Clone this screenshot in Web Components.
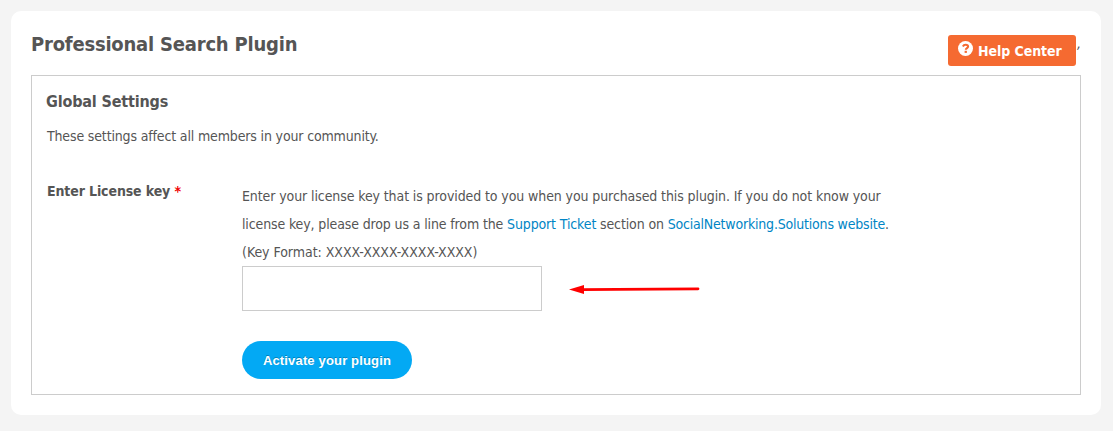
<!DOCTYPE html>
<html lang="en"><head><meta charset="utf-8"><title>Professional Search Plugin</title>
<style>
html,body{height:100%}
body{margin:0;background:#f4f4f4;color:#555;font:14px/28px "DejaVu Sans Condensed","DejaVu Sans",sans-serif;font-stretch:condensed}
</style></head><body>
<plugin-page>
  <span slot="title">Professional Search Plugin</span>
  <help-button slot="action">Help Center</help-button>
  <settings-form></settings-form>
</plugin-page>
<script>
const define = (name, html) => customElements.define(name, class extends HTMLElement {
  constructor() {
    super();
    this.attachShadow({ mode: 'open' }).innerHTML = html;
  }
});

define('help-button', `
<style>
:host{display:flex;box-sizing:border-box;width:128px;height:31px;padding:0 0 0 10px;align-items:center;background:#f56a31;border-radius:3px;color:#fff;font-weight:bold;letter-spacing:-.06px}
svg{width:15px;height:15px;margin:-4px 5px 0 0;flex:none}
</style>
<svg viewBox="0 0 15 15"><circle cx="7.5" cy="7.500" r="7.500" fill="#fff"/><path d="M4.900 5.500C5.500 4.200 6.400 3.700 7.600 3.700c1.500 0 2.500.8 2.500 1.900 0 1.500-2.300 1.500-2.300 3.200" fill="none" stroke="#f56a31" stroke-width="2.100"/><rect x="6.600" y="9.800" width="2.300" height="2.100" fill="#f56a31"/></svg><slot></slot>`);

define('red-arrow', `
<style>:host{display:block;width:131px;height:11px}svg{display:block}</style>
<svg width="131" height="11" viewBox="0 0 131 11"><path d="M13 5.700 48 5.300 129 4.800" fill="none" stroke="#f00" stroke-width="2.800" stroke-linecap="round"/><path d="M0 5.600 15 1.100v9z" fill="#f00"/></svg>`);

define('license-field', `
<style>
:host{display:grid;grid-template-columns:195px 1fr;letter-spacing:-.1px}
.label{font-weight:bold;letter-spacing:-.12px;margin-top:-5px}
.label b{color:#f00000}
.help{width:670px;white-space:nowrap}
.help span{letter-spacing:-.04px}
a{color:#0085c5;text-decoration:none}
a + a{letter-spacing:-.2px}
.row{display:flex;gap:27px}
input{box-sizing:border-box;width:300px;height:45px;margin:0;border:1px solid #ccc;background:#fff;padding:0 10px;outline:0}
red-arrow{margin-top:18px}
button{display:block;width:170px;height:38px;margin:30px 0 0;padding:1px 0 0;border:0;border-radius:19px;background:#03a9f4;color:#fff;font:bold 13px/37px "Liberation Sans",sans-serif;letter-spacing:.16px;text-shadow:0 -1px 0 rgba(0,0,0,.25)}
</style>
<div class="label">Enter License key <b>*</b></div>
<div>
  <div class="help">Enter your license key that is provided to you when you purchased this plugin. If you do not know your<br><span style="letter-spacing:-.13px">license key, please drop us a line from the <a href="#">Support Ticket</a> section on <a href="#">SocialNetworking.Solutions website</a>.</span><br><span>(Key Format: XXXX-XXXX-XXXX-XXXX)</span></div>
  <div class="row"><input type="text" aria-label="License key"><red-arrow></red-arrow></div>
  <button>Activate your plugin</button>
</div>`);

define('settings-form', `
<style>
:host{display:block;box-sizing:border-box;height:320px;border:1px solid #ccc;padding:12px 14px 0 15px}
h3{margin:0 0 0 -1px;font-size:16px;line-height:28px;letter-spacing:-.16px}
p{margin:6px 0 32px;letter-spacing:-.15px}
</style>
<h3>Global Settings</h3>
<p>These settings affect all members in your community.</p>
<license-field></license-field>`);

define('plugin-page', `
<style>
:host{display:block;padding:11px 12px 16px 11px}
main{box-sizing:border-box;height:404px;background:#fff;border-radius:10px;padding:20px 20px 0}
header{display:flex;height:44px;justify-content:space-between}
h2{margin:0;font-size:20px;line-height:26px;letter-spacing:-.21px}
.action{display:flex;padding-top:4px}
.mark{box-sizing:border-box;width:5px;padding-left:1px;font:italic 14px/26px "DejaVu Sans Condensed",sans-serif;margin-top:-5px}
</style>
<main><header><h2><slot name="title"></slot></h2><div class="action"><slot name="action"></slot><span class="mark">,</span></div></header><slot></slot></main>`);
</script></body></html>
